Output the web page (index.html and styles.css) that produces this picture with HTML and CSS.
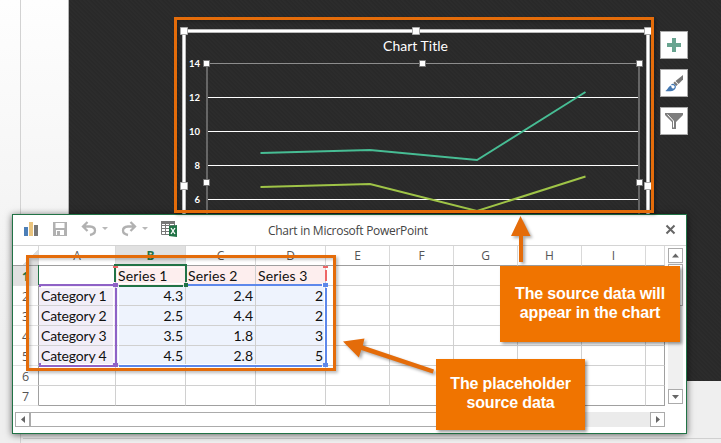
FILE: index.html
```html
<!DOCTYPE html>
<html lang="en">
<head>
<meta charset="utf-8">
<title>Chart in Microsoft PowerPoint</title>
<link rel="stylesheet" href="styles.css">
</head>
<body>
<main class="workspace">
  <div class="pane-line"></div>
  <div class="notes-line"></div>
  <section class="slide">
    <svg class="chart" width="652" height="214" viewBox="69 0 652 214">
      <g shape-rendering="crispEdges">
        <path d="M207 97.5H638M207 131.5H638M207 165.5H638M207 199.5H638" stroke="#fff"/>
        <path d="M207 63.5H638" stroke="#8d8d8d"/>
        <path d="M207 64V214M639 64V214" stroke="#666" stroke-width="1.6"/>
        <path d="M184 214V31H648V214" fill="none" stroke="#b9b9b9" stroke-width="4"/>
        <path d="M184 214V31H648V214" fill="none" stroke="#fff" stroke-width="2"/>
      </g>
      <g fill="none" stroke-width="2">
        <path d="M260.500 153L370 150L477 160L585.500 92" stroke="#47bd94"/>
        <path d="M260.500 187L370 184L477 211L585.500 176.500" stroke="#9fc447"/>
      </g>
      <g fill="#fff" stroke="#aaa">
        <path d="M180.500 27.500h7v7h-7zM412.500 27.500h7v7h-7zM644.500 27.500h7v7h-7zM180.500 182.500h7v7h-7zM644.500 182.500h7v7h-7z"/>
        <path d="M203.500 60.500h6v6h-6zM419.500 60.500h6v6h-6zM636.500 60.500h6v6h-6zM203.500 179.500h6v6h-6zM636.500 179.500h6v6h-6z" stroke="#777"/>
      </g>
      <text class="chart-title" x="383" y="51" textLength="65">Chart Title</text>
      <g class="axis" text-anchor="end">
        <text x="200" y="66.500">14</text><text x="200" y="100.500">12</text><text x="200" y="134.500">10</text><text x="200" y="168.500">8</text><text x="200" y="202.500">6</text>
      </g>
    </svg>
    <div class="chart-tools">
      <button class="tool"><svg width="26" height="26"><path d="M11 6h4v5h5v4h-5v5h-4v-5H6v-4h5z" fill="#68a490"/></svg></button>
      <button class="tool"><svg width="26" height="26"><path d="M22 5V9.500l-4.500 4.500-3-3z" fill="#777"/><path d="M13.800 11.500l3 3-1.500 1.500-3-3z" fill="#777"/><path d="M10.500 15c1.500-1.500 4.500.3 3.700 2.500-.8 2-3 3-5 3" fill="#fff" stroke="#4579b3" stroke-width="1.300"/><path d="M4 21c2.500-.5 3-4.500 6-5.500l.8 2.500 2.200 1c-2 2.500-5.500 2.500-9 2z" fill="#4579b3"/></svg></button>
      <button class="tool"><svg width="26" height="26"><path d="M4 5h18v2l-7 7v7h-4v-7L4 7z" fill="#7d7d7d"/><path d="M6.500 6.500l6 6.500v6.500" fill="none" stroke="#fff"/></svg></button>
    </div>
  </section>
  <div class="marker chart-marker"></div>

  <section class="window">
    <header class="titlebar">
      <svg class="quick" width="170" height="30" viewBox="13 215 170 30">
        <path d="M24 227h4v9h-4z" fill="#4d7fb7"/><path d="M29 222h4v14h-4z" fill="#e9c37d"/><path d="M34 225h4v11h-4z" fill="#777"/>
        <path d="M53 222h14v14H53z" fill="#b1b1b1"/><path d="M55.500 223h9v5h-9zM56 230h8v5h-8z" fill="#fff"/><path d="M57 231h3v4h-3z" fill="#b1b1b1"/>
        <path d="M84 226.500h6q5 .5 5 4t-5 4.500M87.500 222l-4.500 4.500 4.500 4.500" fill="none" stroke="#b1b1b1" stroke-width="2.300"/>
        <path d="M102 227h6l-3 3zM142 227h6l-3 3z" fill="#b8b8b8"/>
        <path d="M134 226.500h-6q-5 .5-5 4t5 4.500M130.500 222l4.500 4.500-4.500 4.500" fill="none" stroke="#b1b1b1" stroke-width="2.300"/>
        <path d="M161.500 221.500h13v13h-13zM162 225.500h12M162 228.500h12M162 231.500h12M165.500 222v12M169.500 222v12" fill="none" stroke="#777"/><path d="M161 221h14v3h-14z" fill="#777"/>
        <path d="M169 226l8-1v12l-8-1z" fill="#217346"/><path d="M171 228l4 6M175 228l-4 6" stroke="#fff" stroke-width="1.300"/>
      </svg>
      <h1 class="title">Chart in Microsoft PowerPoint</h1>
      <svg class="close" width="12" height="12"><path d="M1.500 1.500l8 8M9.500 1.500l-8 8" stroke="#666" stroke-width="2"/></svg>
    </header>
    <div class="sheet">
      <div class="grid">
        <b class="corner"></b><b>A</b><b class="active">B</b><b>C</b><b>D</b><b>E</b><b>F</b><b>G</b><b>H</b><b>I</b><b></b>
        <i class="active">1</i><span></span><span class="series">Series 1</span><span class="series">Series 2</span><span class="series">Series 3</span><span></span><span></span><span></span><span></span><span></span><span></span>
        <i>2</i><span class="cat">Category 1</span><span class="num">4.3</span><span class="num">2.4</span><span class="num">2</span><span></span><span></span><span></span><span></span><span></span><span></span>
        <i>3</i><span class="cat">Category 2</span><span class="num">2.5</span><span class="num">4.4</span><span class="num">2</span><span></span><span></span><span></span><span></span><span></span><span></span>
        <i>4</i><span class="cat">Category 3</span><span class="num">3.5</span><span class="num">1.8</span><span class="num">3</span><span></span><span></span><span></span><span></span><span></span><span></span>
        <i>5</i><span class="cat">Category 4</span><span class="num">4.5</span><span class="num">2.8</span><span class="num">5</span><span></span><span></span><span></span><span></span><span></span><span></span>
        <i>6</i><span></span><span></span><span></span><span></span><span></span><span></span><span></span><span></span><span></span><span></span>
        <i>7</i><span></span><span></span><span></span><span></span><span></span><span></span><span></span><span></span><span></span><span></span>
      </div>
      <div class="vscroll">
        <div class="arrow"><svg width="13" height="13"><path d="M3 8.500h7l-3.500-4z"/></svg></div>
        <div class="vthumb"></div>
        <div class="arrow"><svg width="13" height="13"><path d="M3 5h7l-3.500 4z"/></svg></div>
      </div>
    </div>
    <div class="hscroll">
      <div class="arrow"><svg width="13" height="13"><path d="M9 3v7L5 6.500z"/></svg></div>
      <div class="hthumb"></div>
      <div class="arrow"><svg width="13" height="13"><path d="M5 3v7l4-3.500z"/></svg></div>
    </div>
  </section>

  <svg class="ranges" width="721" height="443" shape-rendering="crispEdges">
    <path d="M41 287.500H113M113.500 288V363" stroke="#fff" fill="none"/>
    <path d="M38 265h1v20h-1zM114 264h73v2h-71v16h-2zM185 264h2v18h-2zM119 285h64v2h-64zM184 283h4v4h-4z" fill="#217346"/>
    <path d="M118.500 267.500H184M118 283.500H183M117.500 267V283" stroke="#fff" fill="none"/>
    <path d="M41 284h72v2H41zM115 288h2v75h-2zM41 365h72v2H41zM39 284h2v3h-2zM39 363h2v4h-2zM113 283h5v4h-5zM113 363h5v4h-5z" fill="#8f62c6"/>
    <path d="M188 284h134v2H188zM325 288h2v75h-2zM119 365h203v2H119zM323 283h5v4h-5zM323 363h5v4h-5z" fill="#5d88eb"/>
    <path d="M113 266h5v2h-5zM323 266h5v2h-5zM325 270h2v11h-2z" fill="#e66"/>
    <path d="M120 364.500H322M41 364.500H112M324.500 288V362M322.500 283v4M118.500 288V362" stroke="#fff"/>
  </svg>
  <div class="marker data-marker"></div>
  <svg class="arrows" width="721" height="443" fill="#e46c0a">
    <path d="M520.500 216L530.500 236H523V262H519V236H511z"/>
    <path d="M343 341.500L364.500 338.500L362.800 345.500L434 369.500L432.700 373.500L361.300 350L358.800 357.500z"/>
  </svg>
  <aside class="callout chart-callout">The source data will<br>appear in the chart</aside>
  <aside class="callout data-callout">The placeholder<br>source data</aside>
</main>
</body>
</html>
```
FILE: styles.css
```css
* { box-sizing: border-box; }
body { margin: 0; }
.workspace {
  position: relative;
  width: 721px;
  height: 443px;
  overflow: hidden;
  padding-left: 68px;
  background: linear-gradient(#fefefe, #efefef 75%);
}
.pane-line { position: absolute; left: 20px; top: 0; width: 1px; height: 443px; background: #d2d2d2; }
.notes-line { position: absolute; left: 23px; right: 0; top: 438px; height: 1px; background: #d0d0d0; }
.slide {
  position: relative;
  height: 381px;
  border-left: 1px solid #b5b5b5;
  background: repeating-linear-gradient(45deg, #2c2c2c 0 1px, #292929 2px 3px);
}
.chart { display: block; }
.chart-title { font: 14px Lato, sans-serif; fill: #fff; }
.axis { font: bold 9.500px Lato, sans-serif; fill: #fff; }
.chart-tools { position: absolute; left: 591px; top: 31px; display: flex; flex-direction: column; gap: 10px; }
.tool { width: 28px; height: 28px; padding: 0; border: 1px solid #ababab; background: #fff; }
.tool svg { display: block; }
.marker { position: absolute; border: 3px solid #e46c0a; box-shadow: 2px 2px 3px #0004, inset 2px 2px 3px #0003; }
.chart-marker { left: 174px; top: 17px; width: 480px; height: 196px; z-index: 1; }
.data-marker { left: 26px; top: 255px; width: 310px; height: 116px; }
.window {
  position: absolute;
  left: 12px;
  top: 214px;
  width: 675px;
  height: 220px;
  border: 1px solid #217346;
  background: #fff;
  box-shadow: 0 1px 7px #0009;
}
.titlebar { display: flex; align-items: center; height: 31px; border-bottom: 1px solid #d4d4d4; }
.quick { flex: none; }
.title { flex: 1; margin: 0; padding-left: 85px; font: 12px "Open Sans", sans-serif; letter-spacing: -.28px; color: #444; }
.close { margin-right: 9px; }
.sheet { display: flex; gap: 3px; height: 160px; }
.grid {
  display: grid;
  grid-template-columns: 26px 77px repeat(3, 70px) repeat(5, 64px) 19px;
  grid-template-rows: repeat(8, 20px);
  font: 14px/20px Lato, sans-serif;
  color: #111;
}
.grid b {
  border-right: 1px solid #d9d9d9;
  border-bottom: 1px solid #9e9e9e;
  font: 12px/20px "Open Sans", sans-serif;
  text-align: center;
  color: #555;
}
.grid i {
  border-right: 1px solid #a0a0a0;
  border-bottom: 1px solid #e2e2e2;
  font: 12.500px/21px "Open Sans", sans-serif;
  text-align: center;
  color: #555;
}
.grid .active { background: #e1e1e1; color: #217346; font-weight: bold; }
.grid .corner { background: linear-gradient(135deg, #fff 0 65%, #ddd 65%); }
.grid span { border-right: 1px solid #d0d0d0; border-bottom: 1px solid #d0d0d0; padding: 0 2px; white-space: nowrap; }
.grid span:nth-child(11n) { border-right-color: #a0a0a0; }
.grid span:nth-last-child(-n+10) { border-bottom-color: #a0a0a0; }
.grid .series { background: #fdeeee; letter-spacing: .12px; }
.grid .cat { background: #f2eef8; letter-spacing: -.2px; }
.grid .num { background: #eef3fd; text-align: right; }
.vscroll { display: flex; flex-direction: column; width: 15px; height: 156px; margin-top: 2px; background: #f0f0f0; }
.arrow { flex: none; width: 15px; height: 15px; border: 1px solid #ababab; background: #fff; }
.arrow svg { display: block; fill: #666; }
.vthumb { height: 43px; margin: 1px 0 83px; border: 1px solid #ababab; background: #fff; }
.hscroll { display: flex; width: 650px; height: 15px; margin: 6px 0 0 2px; background: #ebebeb; }
.hthumb { width: 470px; margin-right: 150px; border: 1px solid #ababab; background: #fff; }
.ranges, .arrows { position: absolute; left: 0; top: 0; }
.arrows { filter: drop-shadow(2px 2px 1.500px #0005); }
.callout {
  position: absolute;
  display: grid;
  place-content: center;
  padding-bottom: 3px;
  text-align: center;
  background: #f07400;
  color: #fff;
  font: bold 16px/19px "Liberation Sans", sans-serif;
  letter-spacing: -.15px;
  box-shadow: 2px 2px 3px #0006;
}
.chart-callout { left: 500px; top: 266px; width: 180px; height: 76px; }
.data-callout { left: 436px; top: 359px; width: 149px; height: 71px; }
```
